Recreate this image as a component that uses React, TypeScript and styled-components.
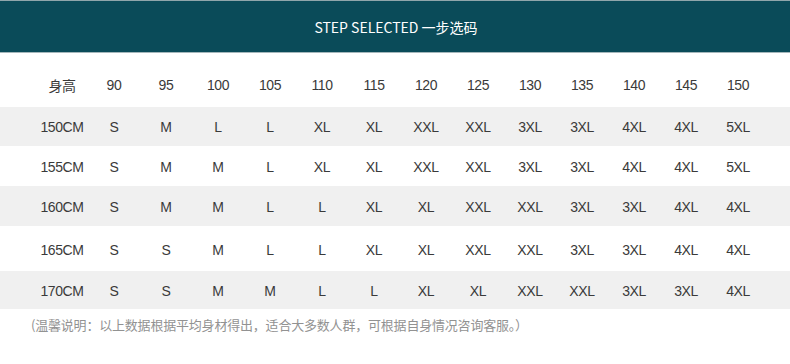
import React from "react";
import styled, { createGlobalStyle } from "styled-components";

const Global = createGlobalStyle`
  html, body { margin: 0; padding: 0; background: #ffffff; }
  body { width: 790px; height: 364px; overflow: hidden; }
`;

const Page = styled.div`
  width: 790px;
  display: flex;
  flex-direction: column;
  font-family: "Liberation Sans", "Noto Sans CJK SC", sans-serif;
  color: #3a3a3a;
`;

const Banner = styled.div`
  height: 51px;
  background: #0a4b59;
  border-top: 1px solid #90a6ab;
  border-bottom: 1px solid #a5b7bb;
  display: flex;
  align-items: center;
  justify-content: center;
  color: #ffffff;
  font-family: "Noto Sans CJK SC", "Noto Sans", sans-serif;
  font-size: 14px;
  padding-left: 2px;
`;

const Row = styled.div<{ $h: number; $shaded?: boolean; $pt?: number }>`
  height: ${(p) => p.$h}px;
  box-sizing: border-box;
  padding-left: 36px;
  padding-top: ${(p) => p.$pt ?? 0}px;
  background: ${(p) => (p.$shaded ? "#f0f0f0" : "#ffffff")};
  display: grid;
  grid-template-columns: repeat(14, 52px);
  align-items: center;
`;

const Cell = styled.div`
  text-align: center;
  font-size: 14px;
  letter-spacing: -0.4px;
  white-space: nowrap;
`;

const Note = styled.div`
  padding: 8px 0 0 31px;
  font-family: "Noto Sans CJK SC", sans-serif;
  font-size: 13px;
  line-height: 16px;
  color: #929292;
  letter-spacing: -0.2px;
`;

const heights = [90, 95, 100, 105, 110, 115, 120, 125, 130, 135, 140, 145, 150];

const rows: { label: string; sizes: string[]; h: number }[] = [
  { label: "150CM", sizes: ["S", "M", "L", "L", "XL", "XL", "XXL", "XXL", "3XL", "3XL", "4XL", "4XL", "5XL"], h: 39 },
  { label: "155CM", sizes: ["S", "M", "M", "L", "XL", "XL", "XXL", "XXL", "3XL", "3XL", "4XL", "4XL", "5XL"], h: 40 },
  { label: "160CM", sizes: ["S", "M", "M", "L", "L", "XL", "XL", "XXL", "XXL", "3XL", "3XL", "4XL", "4XL"], h: 40 },
  { label: "165CM", sizes: ["S", "S", "M", "L", "L", "XL", "XL", "XXL", "XXL", "3XL", "3XL", "4XL", "4XL"], h: 45 },
  { label: "170CM", sizes: ["S", "S", "M", "M", "L", "L", "XL", "XL", "XXL", "XXL", "3XL", "3XL", "4XL"], h: 38 },
];

export default function App() {
  return (
    <Page>
      <Global />
      <Banner>STEP SELECTED 一步选码</Banner>
      <Row $h={54} $pt={10}>
        <Cell>身高</Cell>
        {heights.map((h) => (
          <Cell key={h}>{h}</Cell>
        ))}
      </Row>
      {rows.map((r, i) => (
        <Row key={r.label} $h={r.h} $shaded={i % 2 === 0} $pt={i === 0 ? 0 : 2}>
          <Cell>{r.label}</Cell>
          {r.sizes.map((s, j) => (
            <Cell key={j}>{s}</Cell>
          ))}
        </Row>
      ))}
      <Note>(温馨说明：以上数据根据平均身材得出，适合大多数人群，可根据自身情况咨询客服。）</Note>
    </Page>
  );
}
